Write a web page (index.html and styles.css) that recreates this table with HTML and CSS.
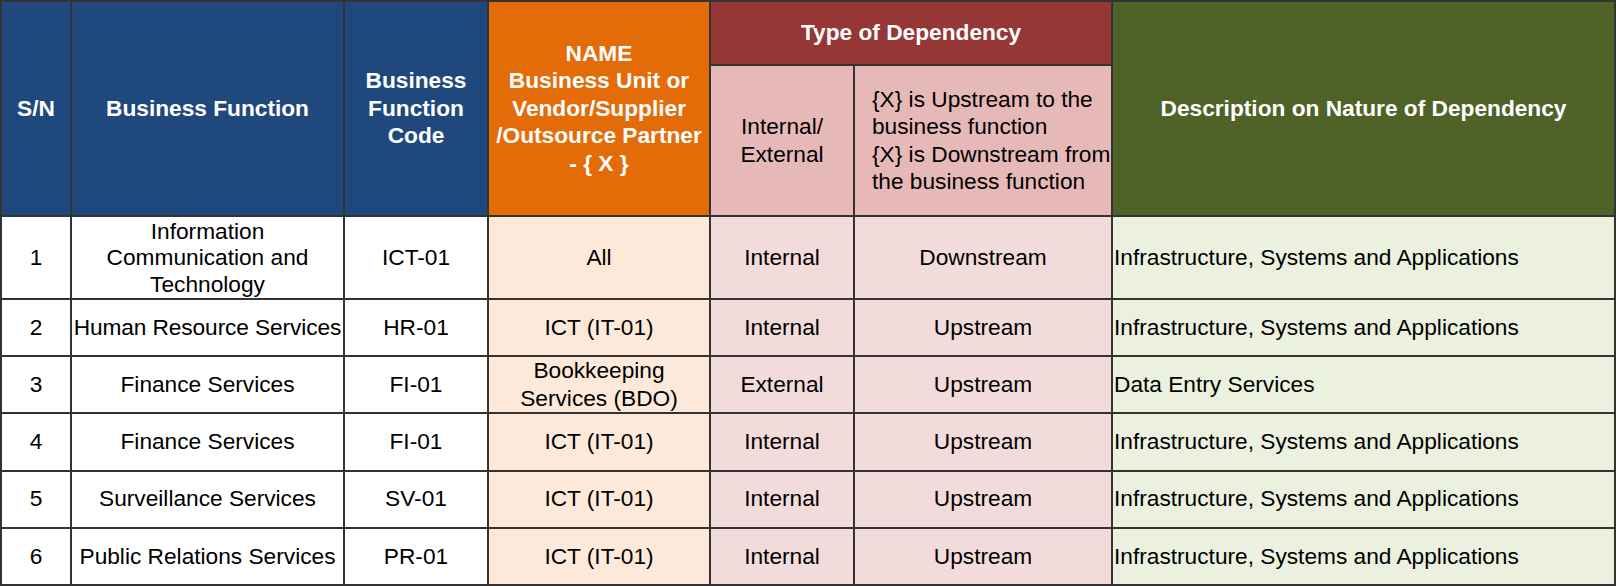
FILE: index.html
```html
<!DOCTYPE html>
<html>
<head>
<meta charset="utf-8">
<link rel="stylesheet" href="styles.css">
</head>
<body>
<table class="dep">
  <colgroup>
    <col class="c-sn">
    <col class="c-fn">
    <col class="c-code">
    <col class="c-name">
    <col class="c-ie">
    <col class="c-ud">
    <col class="c-desc">
  </colgroup>
  <thead>
    <tr class="h1">
      <th rowspan="2" class="blue">S/N</th>
      <th rowspan="2" class="blue">Business Function</th>
      <th rowspan="2" class="blue">Business<br>Function<br>Code</th>
      <th rowspan="2" class="orange">NAME<br>Business Unit or<br>Vendor/Supplier<br>/Outsource Partner<br>- { X }</th>
      <th colspan="2" class="red">Type of Dependency</th>
      <th rowspan="2" class="green">Description on Nature of Dependency</th>
    </tr>
    <tr class="h2">
      <th class="pinkh">Internal/<br>External</th>
      <th class="pinkh left">{X} is Upstream to the<br>business function<br>{X} is Downstream from<br>the business function</th>
    </tr>
  </thead>
  <tbody>
    <tr class="tall">
      <td>1</td>
      <td>Information<br>Communication and<br>Technology</td>
      <td>ICT-01</td>
      <td class="peach">All</td>
      <td class="rose">Internal</td>
      <td class="rose">Downstream</td>
      <td class="olive">Infrastructure, Systems and Applications</td>
    </tr>
    <tr>
      <td>2</td>
      <td class="tight">Human Resource Services</td>
      <td>HR-01</td>
      <td class="peach">ICT (IT-01)</td>
      <td class="rose">Internal</td>
      <td class="rose">Upstream</td>
      <td class="olive">Infrastructure, Systems and Applications</td>
    </tr>
    <tr>
      <td>3</td>
      <td>Finance Services</td>
      <td>FI-01</td>
      <td class="peach">Bookkeeping<br>Services (BDO)</td>
      <td class="rose">External</td>
      <td class="rose">Upstream</td>
      <td class="olive">Data Entry Services</td>
    </tr>
    <tr>
      <td>4</td>
      <td>Finance Services</td>
      <td>FI-01</td>
      <td class="peach">ICT (IT-01)</td>
      <td class="rose">Internal</td>
      <td class="rose">Upstream</td>
      <td class="olive">Infrastructure, Systems and Applications</td>
    </tr>
    <tr>
      <td>5</td>
      <td>Surveillance Services</td>
      <td>SV-01</td>
      <td class="peach">ICT (IT-01)</td>
      <td class="rose">Internal</td>
      <td class="rose">Upstream</td>
      <td class="olive">Infrastructure, Systems and Applications</td>
    </tr>
    <tr>
      <td>6</td>
      <td>Public Relations Services</td>
      <td>PR-01</td>
      <td class="peach">ICT (IT-01)</td>
      <td class="rose">Internal</td>
      <td class="rose">Upstream</td>
      <td class="olive">Infrastructure, Systems and Applications</td>
    </tr>
  </tbody>
</table>
</body>
</html>
```

FILE: styles.css
```css
html, body {
  margin: 0;
  padding: 0;
  background: #ffffff;
}

.dep {
  border-collapse: collapse;
  table-layout: fixed;
  width: 1614px;
  font-family: "Liberation Sans", Arial, sans-serif;
  font-size: 22.7px;
  line-height: 27.5px;
  color: #000000;
}

.c-sn { width: 70px; }
.c-fn { width: 273px; }
.c-code { width: 144px; }
.c-name { width: 222px; }
.c-ie { width: 144px; }
.c-ud { width: 258px; }
.c-desc { width: 503px; }

.dep th,
.dep td {
  border: 2px solid #333333;
  padding: 0;
  text-align: center;
  vertical-align: middle;
  white-space: nowrap;
  overflow: visible;
}

.dep th {
  font-weight: bold;
  color: #ffffff;
}

.h1 { height: 64px; }
.h2 { height: 151px; }
.dep tbody tr { height: 57.2px; }
.dep tbody tr.tall { height: 83px; line-height: 26.6px; }

.blue { background: #1f497d; }
.orange { background: #e36c09; }
.red { background: #953735; }
.green { background: #4f6228; }

.dep th.pinkh {
  background: #e6b9b8;
  color: #000000;
  font-weight: normal;
}

.dep th.left {
  text-align: left;
  padding-left: 17px;
}

.peach { background: #fde9d9; }
.rose { background: #f2dcdb; }

.dep td.olive {
  background: #ebf1de;
  text-align: left;
  padding-left: 1px;
}

.tight {
  letter-spacing: -0.1px;
}
```
